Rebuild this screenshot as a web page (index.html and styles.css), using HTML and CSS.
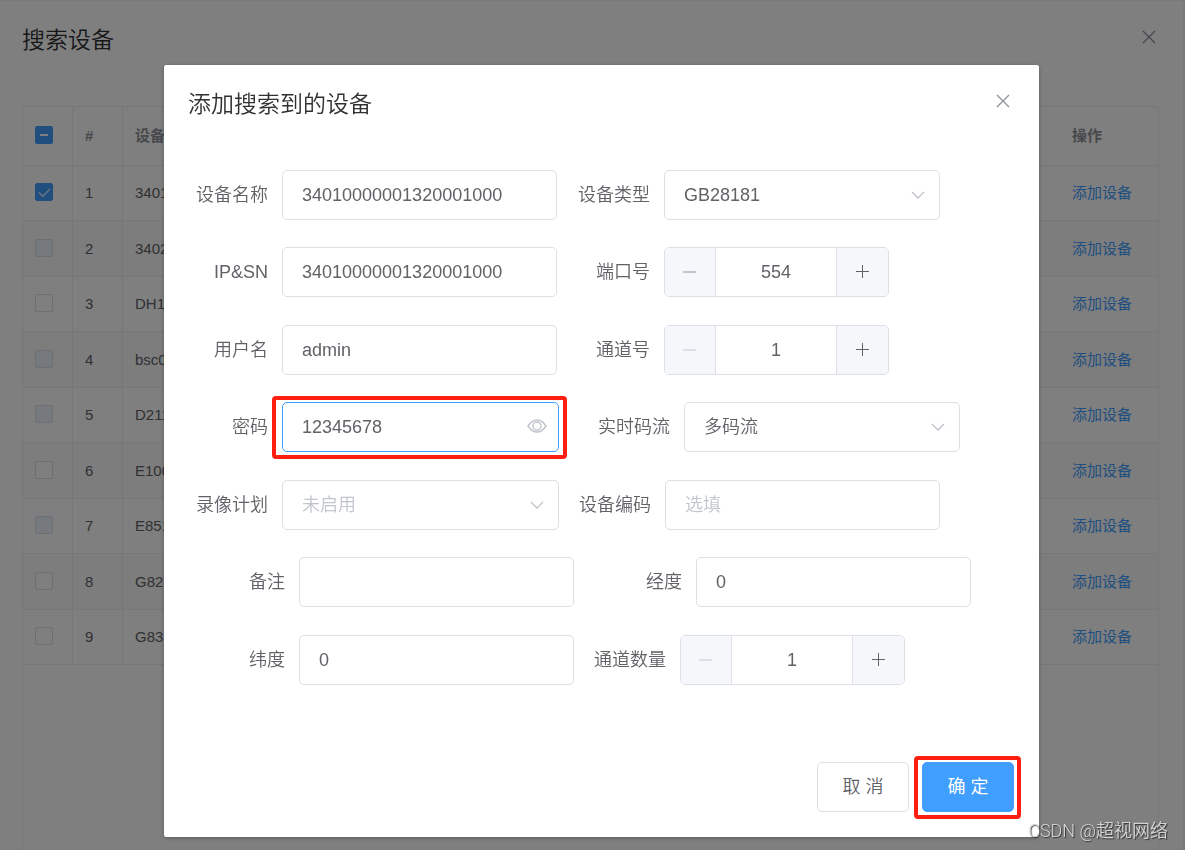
FILE: index.html
```html
<!DOCTYPE html>
<html lang="zh-CN">
<head>
<meta charset="utf-8">
<title>搜索设备</title>
<link rel="stylesheet" href="styles.css">
</head>
<body>
<main class="panel">
  <header class="panel-header">
    <h1 class="title">搜索设备</h1>
    <button class="close" type="button" aria-label="关闭"><svg viewBox="0 0 14 14" width="14" height="14"><path d="M1 1l12 12M13 1L1 13"/></svg></button>
  </header>
  <div class="table-box">
    <table class="table">
      <colgroup><col class="col-check"><col class="col-index"><col><col class="col-action"></colgroup>
      <thead><tr><th><input class="check" type="checkbox" id="check-all" aria-label="全选"></th><th>#</th><th>设备</th><th>操作</th></tr></thead>
      <tbody>
        <tr><td><input class="check" type="checkbox" aria-label="选择 1" checked></td><td>1</td><td>3401</td><td><a href="#">添加设备</a></td></tr>
        <tr><td><input class="check" type="checkbox" aria-label="选择 2" disabled></td><td>2</td><td>3402</td><td><a href="#">添加设备</a></td></tr>
        <tr><td><input class="check" type="checkbox" aria-label="选择 3"></td><td>3</td><td>DH1</td><td><a href="#">添加设备</a></td></tr>
        <tr><td><input class="check" type="checkbox" aria-label="选择 4" disabled></td><td>4</td><td>bsc0</td><td><a href="#">添加设备</a></td></tr>
        <tr><td><input class="check" type="checkbox" aria-label="选择 5" disabled></td><td>5</td><td>D211</td><td><a href="#">添加设备</a></td></tr>
        <tr><td><input class="check" type="checkbox" aria-label="选择 6"></td><td>6</td><td>E100</td><td><a href="#">添加设备</a></td></tr>
        <tr><td><input class="check" type="checkbox" aria-label="选择 7" disabled></td><td>7</td><td>E851</td><td><a href="#">添加设备</a></td></tr>
        <tr><td><input class="check" type="checkbox" aria-label="选择 8"></td><td>8</td><td>G82</td><td><a href="#">添加设备</a></td></tr>
        <tr><td><input class="check" type="checkbox" aria-label="选择 9"></td><td>9</td><td>G83</td><td><a href="#">添加设备</a></td></tr>
      </tbody>
    </table>
  </div>
</main>

<div class="mask">
  <section class="dialog" role="dialog" aria-labelledby="dialog-title">
    <header class="dialog-header">
      <h2 class="title" id="dialog-title">添加搜索到的设备</h2>
      <button class="close" type="button" aria-label="关闭"><svg viewBox="0 0 14 14" width="14" height="14"><path d="M1 1l12 12M13 1L1 13"/></svg></button>
    </header>
    <form class="form">
      <div class="row">
        <label class="label first" for="name">设备名称</label>
        <input class="field" id="name" value="34010000001320001000">
        <label class="label second" for="type">设备类型</label>
        <span class="select"><select class="field" id="type"><option>GB28181</option></select><svg class="arrow" viewBox="0 0 14 8" width="14" height="8"><path d="M1 1l6 6 6-6"/></svg></span>
      </div>
      <div class="row">
        <label class="label first" for="sn">IP&amp;SN</label>
        <input class="field" id="sn" value="34010000001320001000">
        <label class="label second" for="port">端口号</label>
        <span class="number"><button class="step minus" type="button" aria-label="减少"></button><input class="count" id="port" value="554"><button class="step plus" type="button" aria-label="增加"></button></span>
      </div>
      <div class="row">
        <label class="label first" for="user">用户名</label>
        <input class="field" id="user" value="admin">
        <label class="label second" for="channel">通道号</label>
        <span class="number"><button class="step minus" type="button" aria-label="减少" disabled></button><input class="count" id="channel" value="1"><button class="step plus" type="button" aria-label="增加"></button></span>
      </div>
      <div class="row">
        <label class="label first" for="password">密码</label>
        <span class="select marked"><input class="field active" id="password" value="12345678"><svg class="eye" viewBox="0 0 20 14" width="20" height="14"><path d="M1 7Q5 1 10 1t9 6q-4 6-9 6T1 7z"/><circle cx="10" cy="7" r="4"/></svg></span>
        <label class="label wide" for="stream">实时码流</label>
        <span class="select"><select class="field" id="stream"><option>多码流</option></select><svg class="arrow" viewBox="0 0 14 8" width="14" height="8"><path d="M1 1l6 6 6-6"/></svg></span>
      </div>
      <div class="row">
        <label class="label first" for="plan">录像计划</label>
        <span class="select"><select class="field empty" id="plan"><option>未启用</option></select><svg class="arrow" viewBox="0 0 14 8" width="14" height="8"><path d="M1 1l6 6 6-6"/></svg></span>
        <label class="label third" for="code">设备编码</label>
        <input class="field" id="code" placeholder="选填">
      </div>
      <div class="row">
        <label class="label indent" for="remark">备注</label>
        <input class="field" id="remark">
        <label class="label broad" for="longitude">经度</label>
        <input class="field" id="longitude" value="0">
      </div>
      <div class="row">
        <label class="label indent" for="latitude">纬度</label>
        <input class="field" id="latitude" value="0">
        <label class="label third" for="total">通道数量</label>
        <span class="number"><button class="step minus" type="button" aria-label="减少" disabled></button><input class="count" id="total" value="1"><button class="step plus" type="button" aria-label="增加"></button></span>
      </div>
    </form>
    <footer class="dialog-footer">
      <button class="button" type="button">取 消</button>
      <span class="marked"><button class="button primary" type="button">确 定</button></span>
    </footer>
  </section>
</div>
<div class="watermark">CSDN @超视网络</div>
<script src="main.js"></script>
</body>
</html>
```
FILE: main.js
```js
document.getElementById('check-all').indeterminate = true;
```
FILE: styles.css
```css
* { box-sizing: border-box; }

body {
  margin: 0;
  height: 100vh;
  overflow: hidden;
  background: #f4f4f4;
  color: #606266;
  font: 15px/20px "Liberation Sans", "Noto Sans CJK SC", sans-serif;
}

button, input, select { margin: 0; font: inherit; color: inherit; }

.title { margin: 0; color: #303133; font-size: 23px; font-weight: 350; line-height: 30px; }

.close { display: flex; padding: 0; border: 0; background: none; }
.close svg { fill: none; stroke: #909399; stroke-width: 1.4; }

.panel {
  display: flex;
  flex-direction: column;
  height: calc(100vh - 1px);
  margin: 1px 2px 0 0;
  padding: 24px 24px 0 22px;
  background: #fff;
}
.panel-header { display: flex; justify-content: space-between; padding: 0 3px 51px 0; }
.panel-header .close { padding-top: 5px; }

.table-box { flex: 1; border: 1px solid #ebeef5; border-bottom: 0; border-radius: 4px 4px 0 0; }
.table { width: 100%; table-layout: fixed; border-collapse: separate; border-spacing: 0; }
.col-check, .col-index { width: 50px; }
.col-action { width: 130px; }
.table th, .table td {
  height: 55px;
  padding: 0 0 0 12px;
  overflow: hidden;
  border-right: 1px solid #ebeef5;
  border-bottom: 1px solid #ebeef5;
  text-align: left;
  white-space: nowrap;
}
.table th { height: 59px; color: #909399; font-weight: bold; }
.table th:last-child, .table td:last-child { padding-left: 44px; border-right: 0; }
.table tr:nth-child(even) td { height: 56px; background: #fafafa; }
.table a { color: #409eff; text-decoration: none; }

.check {
  display: block;
  width: 18px;
  height: 18px;
  margin-bottom: 2px;
  appearance: none;
  border: 1px solid #dcdfe6;
  border-radius: 2px;
  background: #fff;
}
.check:disabled { background: #edf2fc; }
.check:checked, .check:indeterminate { display: grid; place-items: center; border-color: #409eff; background: #409eff; }
.check:indeterminate::after { content: ""; width: 8px; height: 2px; background: #fff; }
.check:checked::after {
  content: "";
  width: 10px;
  height: 5px;
  margin-bottom: 3px;
  border: solid #fff;
  border-width: 0 0 1px 1px;
  rotate: -45deg;
}

.mask {
  position: fixed;
  inset: 0;
  display: flex;
  align-items: flex-start;
  padding: 65px 146px 13px 164px;
  background: rgba(0, 0, 0, .5);
}

.dialog {
  flex: 1;
  padding: 24px 25px 25px 24px;
  border-radius: 2px;
  background: #fff;
  box-shadow: 0 1px 4px rgba(0, 0, 0, .3);
  font-size: 18px;
}
.dialog-header { display: flex; justify-content: space-between; padding: 0 4px 51px 0; }
.dialog-header .close { padding-top: 5px; }

.form { display: grid; grid-auto-rows: 77px 78px; }
.row { display: flex; align-items: flex-start; }

.label { flex: none; padding-right: 14px; line-height: 50px; font-weight: 350; text-align: right; white-space: nowrap; }
.first { width: 94px; }
.second { width: 107px; }
.third { width: 106px; }
.wide { width: 125px; }
.broad { width: 122px; }
.indent { width: 111px; }

.field {
  width: 275px;
  height: 50px;
  padding: 0 19px;
  appearance: none;
  border: 1px solid #dcdfe6;
  border-radius: 5px;
  outline: 0;
  background: #fff;
  font-weight: 350;
}
.field::placeholder { color: #c0c4cc; opacity: 1; }
.select { position: relative; display: block; }
.select .field { display: block; width: 276px; }
.select .empty, .select .active { width: 277px; }
.empty { color: #c0c4cc; }
.active { border-color: #409eff; }
.arrow, .eye { position: absolute; fill: none; stroke: #c0c4cc; pointer-events: none; }
.arrow { top: 21px; right: 15px; stroke-width: 1.4; }
.eye { top: 17px; right: 12px; stroke-width: 1.4; }

.number { display: flex; width: 225px; height: 50px; overflow: hidden; border: 1px solid #dcdfe6; border-radius: 5px; }
.count { flex: 1; min-width: 0; padding: 0; border: 0; outline: 0; text-align: center; }
.step { display: grid; place-items: center; width: 51px; padding: 0 1px 1px 0; border: 0; background: #f5f7fa; }
.minus { border-right: 1px solid #dcdfe6; }
.plus { width: 52px; border-left: 1px solid #dcdfe6; }
.step::before, .plus::after { content: ""; grid-area: 1 / 1; width: 13px; height: 1px; background: #606266; }
.plus::after { width: 1px; height: 13px; }
.minus::before { height: 2px; background: #c0c4cc; }
.minus:disabled::before { background: #dcdfe6; }

.dialog-footer { display: flex; justify-content: flex-end; gap: 13px; padding-top: 50px; }
.button { width: 92px; height: 50px; padding: 0; border: 1px solid #dcdfe6; border-radius: 5px; background: #fff; font-weight: 350; }
.primary { border-color: #409eff; background: #409eff; color: #fff; font-weight: 400; }

.marked { position: relative; display: block; }
.marked::after {
  content: "";
  position: absolute;
  inset: -6px -8px -7px -10px;
  border: 4px solid #ff1e10;
  border-radius: 4px;
  pointer-events: none;
}
.dialog-footer .marked::after { inset: -6px -7px -7px -8px; }

.watermark {
  position: fixed;
  right: 17px;
  bottom: 8px;
  color: #d4d4d4;
  font: 18px/22px Roboto, "Noto Sans CJK SC", sans-serif;
  font-weight: 350;
  text-shadow: 1px 1px 1px #333;
}
```
